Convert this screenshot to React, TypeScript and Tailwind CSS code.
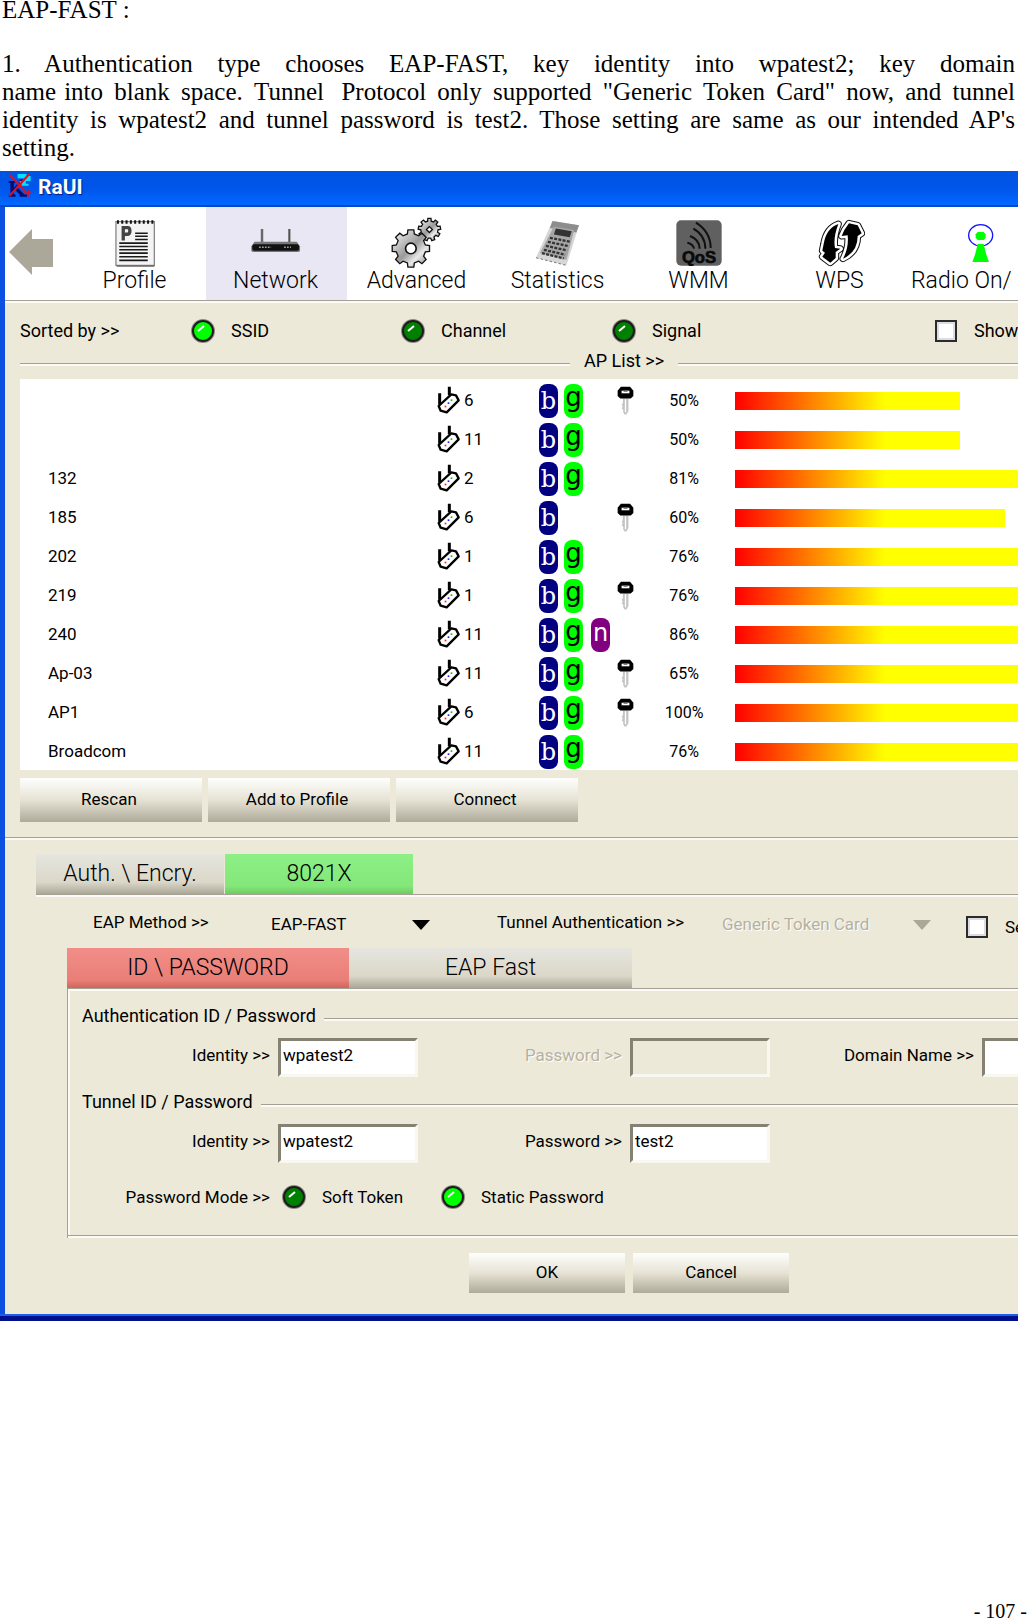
import React, { useState } from 'react';

type AccessPoint = {
    ssid: string;
    channel: number;
    modes: string;
    locked: boolean;
    signal: number;
};

const accessPoints: AccessPoint[] = [
    { ssid: '', channel: 6, modes: 'bg', locked: true, signal: 50 },
    { ssid: '', channel: 11, modes: 'bg', locked: false, signal: 50 },
    { ssid: '132', channel: 2, modes: 'bg', locked: false, signal: 81 },
    { ssid: '185', channel: 6, modes: 'b', locked: true, signal: 60 },
    { ssid: '202', channel: 1, modes: 'bg', locked: false, signal: 76 },
    { ssid: '219', channel: 1, modes: 'bg', locked: true, signal: 76 },
    { ssid: '240', channel: 11, modes: 'bgn', locked: false, signal: 86 },
    { ssid: 'Ap-03', channel: 11, modes: 'bg', locked: true, signal: 65 },
    { ssid: 'AP1', channel: 6, modes: 'bg', locked: true, signal: 100 },
    { ssid: 'Broadcom', channel: 11, modes: 'bg', locked: false, signal: 76 },
];

// Outline of a toothed wheel around (cx, cy)
const gearPath = (cx: number, cy: number, outer: number, inner: number, teeth: number) => {
    const points: string[] = [];
    const step = (Math.PI * 2) / teeth;
    for (let i = 0; i < teeth; i++) {
        const a = i * step - Math.PI / 2;
        [[-0.3, inner], [-0.2, outer], [0.2, outer], [0.3, inner]].forEach(([k, r]) => {
            points.push(`${(cx + Math.cos(a + k * step) * r).toFixed(1)},${(cy + Math.sin(a + k * step) * r).toFixed(1)}`);
        });
    }
    return `M${points.join('L')}Z`;
};

const LogoIcon: React.FC = () => (
    <svg viewBox="0 0 70 80" className="w-6 h-7 shrink-0" aria-hidden="true">
        <path d="M2 28H22V34H17V48L34 30V24H50V30H44L28 48L48 68H56V74H34V68L20 54L17 56V68H22V74H2V68H7V34H2Z" fill="#0a0a6e" />
        <path d="M28 8H54V14H66V28H52V36H60V42H40V34H34V28H46V20H28Z" fill="#00e5ff" />
        <path d="M4 10L58 66M62 8L4 72" stroke="#e01020" strokeWidth="6" />
        <path d="M48 62H66M58 54V74" stroke="#e01020" strokeWidth="5" />
    </svg>
);

const ProfileIcon: React.FC = () => (
    <svg viewBox="345 160 125 145" className="w-[42px] h-12" aria-hidden="true">
        <path d="M350 168H466V300H350Z" fill="#f4f4f4" stroke="#888" strokeWidth="4" />
        <path d="M352 302H466" stroke="#666" strokeWidth="5" />
        <path d="M356 164V174M369 164V174M382 164V174M395 164V174M408 164V174M421 164V174M434 164V174M447 164V174M460 164V174" stroke="#111" strokeWidth="6" />
        <path d="M372 225V186H386Q392 186 392 196Q392 206 384 206H372" fill="none" stroke="#444" strokeWidth="10" />
        <path d="M408 203H446M408 212H446M408 222H446M360 233H446M360 243H446M360 253H446M360 263H446M360 274H446M360 285H446" stroke="#1a1a1a" strokeWidth="5" />
    </svg>
);

const NetworkIcon: React.FC = () => (
    <svg viewBox="750 190 160 110" className="w-[52px] h-9" aria-hidden="true">
        <path d="M787 202V242M871 202V242" stroke="#8a8a8a" strokeWidth="8" />
        <path d="M787 202V242M871 202V242" stroke="#444" strokeWidth="3" />
        <path d="M764 241H894L904 256V268Q904 273 896 273H762Q754 273 754 268V256Z" fill="#777" />
        <rect x="757" y="249" width="144" height="20" rx="6" fill="#111" />
        <path d="M778 258H815M855 258H876" stroke="#aaa" strokeWidth="4" strokeDasharray="5 4" />
    </svg>
);

const AdvancedIcon: React.FC = () => (
    <svg viewBox="152 160 160 155" className="w-[53px] h-[52px]" aria-hidden="true">
        <defs>
            <linearGradient id="metal" x1="0" y1="0" x2="1" y2="1">
                <stop offset="0" stopColor="#ffffff" />
                <stop offset="0.5" stopColor="#9a9a9a" />
                <stop offset="0.7" stopColor="#e8e8e8" />
                <stop offset="1" stopColor="#777777" />
            </linearGradient>
        </defs>
        <path d={gearPath(271, 197, 34, 26, 9)} fill="url(#metal)" stroke="#111" strokeWidth="4" />
        <path d="M271 188L280 197L271 206L262 197Z" fill="#fff" stroke="#111" strokeWidth="4" />
        <path d={gearPath(215, 254, 57, 45, 8)} fill="url(#metal)" stroke="#111" strokeWidth="4" />
        <circle cx="215" cy="254" r="16" fill="#fff" stroke="#111" strokeWidth="5" />
    </svg>
);

const StatisticsIcon: React.FC = () => (
    <svg viewBox="585 165 140 145" className="w-[47px] h-12" aria-hidden="true">
        <path d="M640 171L720 184L682 305L590 282Z" fill="#d6d6d6" />
        <path d="M640 171L720 184L712 206L632 192Z" fill="#8d8d8d" />
        <path d="M644 188L706 198L682 288L602 268Z" fill="#a6a6a6" />
        <path d="M650 194L698 202L692 220L644 212Z" fill="#333" />
        <path d="M632 222L696 234M626 234L690 247M620 246L684 260M614 258L678 273M608 268L674 284" stroke="#333" strokeWidth="7" strokeDasharray="9 4" />
        <path d="M590 282L682 305" stroke="#777" strokeWidth="3" strokeDasharray="8 6" />
    </svg>
);

const QosIcon: React.FC = () => (
    <svg viewBox="0 0 138 138" className="w-[46px] h-[46px]" aria-hidden="true">
        <rect x="1" y="1" width="136" height="136" rx="14" fill="#606060" />
        <path d="M60 8Q104 36 104 84M52 26Q88 46 88 86M42 48Q70 58 71 86M34 68Q52 72 54 86" fill="none" stroke="#111" strokeWidth="6" />
        <text x="69" y="130" textAnchor="middle" className="font-['Liberation_Sans',sans-serif] font-bold text-[50px]" fill="#0a0a0a" stroke="#0a0a0a" strokeWidth="2">QoS</text>
    </svg>
);

const wpsShape = 'M482 178Q446 190 438 238L434 258L442 264L434 276L458 294L474 280V262L488 252L472 250Q466 220 482 178ZM496 282Q540 262 540 214L552 206L540 182L514 176L500 196L492 214L510 212Q514 250 496 282Z';

const WpsIcon: React.FC = () => (
    <svg viewBox="412 160 150 150" className="w-[50px] h-[50px]" aria-hidden="true">
        <path d={wpsShape} fill="#111" stroke="#111" strokeWidth="21" strokeLinejoin="round" />
        <path d={wpsShape} fill="#fff" stroke="#fff" strokeWidth="15" strokeLinejoin="round" />
        <path d={wpsShape} fill="#000" />
    </svg>
);

const RadioIcon: React.FC = () => (
    <svg viewBox="868 178 84 118" className="w-7 h-10" aria-hidden="true">
        <ellipse cx="909" cy="214" rx="36" ry="32" fill="none" stroke="#1414ff" strokeWidth="4" />
        <path d="M900 204H918L924 211V221L918 228H900L894 221V211Z" fill="#00ff00" />
        <path d="M900 240H918L926 272L934 294H884L892 272Z" fill="#00ff00" />
    </svg>
);

const ChannelIcon: React.FC = () => (
    <svg viewBox="114 28 75 84" className="w-[25px] h-7 shrink-0" aria-hidden="true">
        <path d="M122 50V84M151 30V56" stroke="#000" strokeWidth="9" />
        <path d="M157 53L171 56L179 71L143 107L125 102L119 88Z" fill="#fff" stroke="#000" strokeWidth="7" strokeLinejoin="round" />
        <path d="M137 87h5v5h-5Z" fill="#ff2020" />
        <path d="M146 77h5v5h-5Z" fill="#2020ff" />
        <path d="M155 68h5v5h-5Z" fill="#00d000" />
    </svg>
);

const KeyIcon: React.FC = () => (
    <svg viewBox="650 32 52 88" className="w-[17px] h-[29px]" role="img" aria-label="Secured">
        <path d="M668 70H685V108L679 119H673L669 112V104L664 100L668 94L664 90L668 84Z" fill="#c4c4c4" />
        <path d="M676 72V112" stroke="#fff" strokeWidth="4" />
        <path d="M662 34H690L700 46V62L692 70H660L652 62V46Z" fill="#000" />
        <path d="M664 46H688V54H664Z" fill="#fff" />
        <path d="M670 46H682V50H670Z" fill="#888" />
    </svg>
);

const Arrow: React.FC<{ className?: string }> = ({ className }) => (
    <svg viewBox="0 0 18 10" className={`absolute right-0 top-2 w-[18px] h-[10px] pointer-events-none ${className}`} aria-hidden="true">
        <path d="M0 0H18L9 10Z" fill="currentColor" />
    </svg>
);

const Groove: React.FC<{ className?: string }> = ({ className = '' }) => (
    <hr className={`h-[3px] border-0 border-t border-[#a5a192] bg-[#fbfaf6] ${className}`} />
);

type LedProps = { name: string; label: string; checked: boolean; onChange: () => void };

const Led: React.FC<LedProps> = ({ name, label, checked, onChange }) => (
    <label className="flex items-center gap-4 shrink-0">
        <span className="grid shrink-0">
            <input
                type="radio"
                name={name}
                checked={checked}
                onChange={onChange}
                className="col-start-1 row-start-1 appearance-none w-6 h-6 rounded-full border-2 border-[#8a8a80] bg-[#008000] checked:bg-[#00ff00]"
            />
            <svg viewBox="0 0 24 24" className="col-start-1 row-start-1 w-6 h-6 pointer-events-none" aria-hidden="true">
                <circle cx="12" cy="12" r="10" fill="none" stroke="#1c1c1c" strokeWidth="2" />
                <path d="M7 12L13 7" stroke="#fff" strokeWidth="2" />
            </svg>
        </span>
        {label}
    </label>
);

const CheckBox: React.FC<{ label: string }> = ({ label }) => (
    <label className="flex items-center gap-[17px] shrink-0">
        <input type="checkbox" className="appearance-none shrink-0 w-[22px] h-[22px] border-2 border-[#2b2b2b] bg-white shadow-[inset_0_0_0_2px_#dcdce4] checked:bg-[#2b2b2b]" />
        {label}
    </label>
);

const PushButton: React.FC<{ children: React.ReactNode; className: string }> = ({ children, className }) => (
    <button type="button" className={`bg-linear-to-b from-[#fefefd] via-[#e6e3d4] to-[#aeab9b] text-black ${className}`}>
        {children}
    </button>
);

const modeStyles: Record<string, string> = {
    b: "bg-[#000080] text-white font-['DejaVu_Serif',serif] text-[24px]",
    g: "bg-[#00ff00] text-black font-['DejaVu_Sans',sans-serif] text-[26px] pb-2",
    n: "ml-0.5 bg-[#800080] text-white font-['DejaVu_Sans',sans-serif] text-[24px] pb-1",
};

const ModeBadge: React.FC<{ mode: string }> = ({ mode }) => (
    <span className={`flex items-center justify-center w-[19px] h-[34px] rounded-lg leading-none ${modeStyles[mode]}`}>
        {mode}
    </span>
);

const Toolbar: React.FC = () => {
    const tabs = [
        { label: 'Profile', icon: <ProfileIcon /> },
        { label: 'Network', icon: <NetworkIcon /> },
        { label: 'Advanced', icon: <AdvancedIcon /> },
        { label: 'Statistics', icon: <StatisticsIcon /> },
        { label: 'WMM', icon: <QosIcon /> },
        { label: 'WPS', icon: <WpsIcon /> },
        { label: 'Radio On/', icon: <RadioIcon /> },
    ];
    return (
        <nav className="flex h-[93px] bg-white">
            <button type="button" aria-label="Back" className="flex w-[60px] shrink-0 items-center pl-1 pb-1">
                <svg viewBox="0 0 44 46" className="w-11 h-[46px]" aria-hidden="true">
                    <path d="M0 23L23 0V10H44V38H23V46Z" fill="#aca899" />
                </svg>
            </button>
            {tabs.map(tab => (
                <button
                    key={tab.label}
                    type="button"
                    className={`flex w-[141px] shrink-0 flex-col items-center pt-[11px] pr-0.5 text-[23px] leading-[26px] font-light ${tab.label === 'Network' ? 'bg-[#e9e7f4]' : ''}`}
                >
                    <span className="flex h-[50px] items-center justify-center">{tab.icon}</span>
                    <span className={tab.label === 'Radio On/' ? 'self-start' : ''}>{tab.label}</span>
                </button>
            ))}
        </nav>
    );
};

const SortBar: React.FC = () => {
    const [sort, setSort] = useState('SSID');
    return (
        <div className="grid grid-cols-[171px_210px_211px_323px_1fr] h-[50px] pl-[15px] pt-1.5 items-center text-lg leading-6 whitespace-nowrap">
            <span>Sorted by &gt;&gt;</span>
            {['SSID', 'Channel', 'Signal'].map(key => (
                <Led key={key} name="sort" label={key} checked={sort === key} onChange={() => setSort(key)} />
            ))}
            <CheckBox label="Show" />
        </div>
    );
};

const ApTable: React.FC = () => (
    <div className="ml-[15px] bg-white pt-px overflow-hidden">
        <table className="w-full table-fixed">
            <colgroup>
                <col className="w-[417px]" />
                <col className="w-[102px]" />
                <col className="w-[78px]" />
                <col className="w-[37px]" />
                <col className="w-[60px]" />
                <col />
            </colgroup>
            <tbody>
                {accessPoints.map((ap, index) => (
                    <tr key={index} className="h-[39px]">
                        <td className="p-0 pt-0.5 pl-7 text-[17px]">{ap.ssid}</td>
                        <td className="p-0">
                            <span className="flex items-center gap-0.5 text-[17px] leading-6">
                                <ChannelIcon />
                                {ap.channel}
                            </span>
                        </td>
                        <td className="p-0 pt-0.5">
                            <span className="flex gap-1.5">
                                {ap.modes.split('').map(mode => <ModeBadge key={mode} mode={mode} />)}
                            </span>
                        </td>
                        <td className="p-0 pt-0.5">{ap.locked && <KeyIcon />}</td>
                        <td className="p-0 pt-0.5 text-center text-[16px]">{ap.signal}%</td>
                        <td className="p-0 pt-0.5 pl-[21px]">
                            <div
                                className="h-[18px] bg-[linear-gradient(to_right,#ff0000,#ffff00_150px)]"
                                style={{ width: `${ap.signal * 4.5}px` }}
                            />
                        </td>
                    </tr>
                ))}
            </tbody>
        </table>
    </div>
);

const GroupTitle: React.FC<{ children: React.ReactNode }> = ({ children }) => (
    <div className="flex h-4 items-center gap-2 pl-3 text-[18px] leading-4 whitespace-nowrap">
        <h3>{children}</h3>
        <Groove className="mt-1.5 grow" />
    </div>
);

const Field: React.FC<{ id: string; label: string; value?: string; disabled?: boolean }> = ({ id, label, value = '', disabled }) => (
    <>
        <label htmlFor={id} className={`pb-1.5 text-right ${disabled ? 'text-[#b5b1a2] [text-shadow:1px_1px_0_#fff]' : ''}`}>
            {label} &gt;&gt;
        </label>
        <input
            id={id}
            type="text"
            defaultValue={value}
            disabled={disabled}
            className="w-[140px] h-[39px] border-3 border-t-[#858173] border-l-[#858173] border-r-[#f8f7f0] border-b-[#f8f7f0] bg-white pl-0.5 pb-1.5 disabled:bg-[#ece9d8]"
        />
    </>
);

const CredentialsPanel: React.FC = () => {
    const [mode, setMode] = useState('Static Password');
    return (
        <section className="ml-[62px] border-l border-[#a5a192] text-[17px] leading-6 whitespace-nowrap">
            <Groove />
            <div className="border-l-2 border-[#fbfaf6] pt-[17px] pb-[26px]">
                <GroupTitle>Authentication ID / Password</GroupTitle>
                <div className="mt-3.5 grid grid-cols-[200px_140px_196px_140px_196px_140px] gap-x-2 items-center">
                    <Field id="auth-identity" label="Identity" value="wpatest2" />
                    <Field id="auth-password" label="Password" disabled />
                    <Field id="auth-domain" label="Domain Name" />
                </div>
                <div className="mt-[17px]">
                    <GroupTitle>Tunnel ID / Password</GroupTitle>
                </div>
                <div className="mt-3.5 grid grid-cols-[200px_140px_196px_140px] gap-x-2 items-center">
                    <Field id="tunnel-identity" label="Identity" value="wpatest2" />
                    <Field id="tunnel-password" label="Password" value="test2" />
                </div>
                <div className="mt-[22px] flex items-center">
                    <span className="w-[200px] text-right">Password Mode &gt;&gt;</span>
                    <div className="ml-3 w-[159px]">
                        <Led name="mode" label="Soft Token" checked={mode === 'Soft Token'} onChange={() => setMode('Soft Token')} />
                    </div>
                    <Led name="mode" label="Static Password" checked={mode === 'Static Password'} onChange={() => setMode('Static Password')} />
                </div>
            </div>
            <Groove />
        </section>
    );
};

const grayTab = 'bg-linear-to-b from-[#e6e5df] from-0% via-[#dbd8c9] via-70% to-[#aca899]';

const App: React.FC = () => {
    return (
        <main className="flex min-h-screen flex-col overflow-hidden bg-white text-black">
            <article className="pl-0.5 pr-3 font-['Liberation_Serif',serif] text-[25px] leading-7">
                <h1 className="leading-5">EAP-FAST :</h1>
                <p className="mt-[30px]">
                    <span className="block [text-align-last:justify]">
                        1. Authentication type chooses EAP-FAST, key identity into wpatest2; key domain
                    </span>
                    <span className="block [text-align-last:justify]">
                        <span className="inline-flex gap-2"><span>name</span> <span>into</span></span> blank space. <span className="inline-block">Tunnel&nbsp;</span> Protocol only supported "Generic Token Card" now, and tunnel
                    </span>
                    <span className="block [text-align-last:justify]">
                        identity is wpatest2 and tunnel password is test2. Those setting are same as our intended AP's
                    </span>
                    <span className="block">setting.</span>
                </p>
            </article>

            <div className="mt-[9px] mr-[9px] overflow-hidden bg-[#ece9d8] font-['Roboto',sans-serif]">
                <header className="flex h-9 items-start gap-1.5 bg-linear-to-b from-[#0054e3] via-[#0055ea] via-50% to-[#0068ff] border-b-2 border-[#0048cc] pl-2">
                    <LogoIcon />
                    <h2 className="pt-1 text-[21px] leading-6 font-bold text-white [text-shadow:1px_1px_1px_#0a1883]">RaUI</h2>
                </header>

                <div className="border-l-5 border-[#0b50e0] pb-[21px]">
                    <Toolbar />
                    <Groove />
                    <SortBar />
                    <div className="mb-2.5 flex h-4 items-center gap-3.5 pl-[15px] text-[18px] leading-4">
                        <Groove className="mt-1.5 w-[550px]" />
                        <h3>AP List &gt;&gt;</h3>
                        <Groove className="mt-1.5 grow" />
                    </div>
                    <ApTable />
                    <div className="mt-2 mb-[15px] flex gap-1.5 pl-[15px] text-[17px]">
                        <PushButton className="w-[182px] h-11 pr-1">Rescan</PushButton>
                        <PushButton className="w-[182px] h-11 pr-1">Add to Profile</PushButton>
                        <PushButton className="w-[182px] h-11 pr-1">Connect</PushButton>
                    </div>
                    <Groove />

                    <div className="mt-3.5 ml-[31px] flex gap-px text-[23px] font-light">
                        <button type="button" className={`w-[188px] h-10 ${grayTab}`}>Auth. \ Encry.</button>
                        <button type="button" className="w-[188px] h-10 bg-linear-to-b from-[#8cf087] via-[#84e77a] via-80% to-[#6ccc62]">8021X</button>
                    </div>
                    <Groove className="ml-[31px]" />

                    <div className="flex h-[51px] items-center pl-[88px] pt-0.5 text-[17px] leading-6 whitespace-nowrap">
                        <label htmlFor="eap-method" className="w-[178px] shrink-0 pb-1">EAP Method &gt;&gt;</label>
                        <div className="relative shrink-0">
                            <select id="eap-method" className="block h-6 w-[159px] appearance-none bg-transparent">
                                <option>EAP-FAST</option>
                            </select>
                            <Arrow className="text-black" />
                        </div>
                        <label htmlFor="tunnel-auth" className="ml-[67px] w-[225px] shrink-0 pb-1">Tunnel Authentication &gt;&gt;</label>
                        <div className="relative mr-[35px] shrink-0">
                            <select id="tunnel-auth" disabled className="block h-6 w-[209px] appearance-none bg-transparent text-[#b5b1a2] opacity-100 [text-shadow:1px_1px_0_#fff]">
                                <option>Generic Token Card</option>
                            </select>
                            <Arrow className="text-[#aca899]" />
                        </div>
                        <div className="pt-1.5">
                            <CheckBox label="Se" />
                        </div>
                    </div>

                    <div className="ml-[62px] flex text-[23px] font-light">
                        <button type="button" className="w-[282px] h-10 bg-linear-to-b from-[#f18e88] via-[#e97f77] via-80% to-[#cf665e]">ID \ PASSWORD</button>
                        <button type="button" className={`w-[283px] h-10 ${grayTab}`}>EAP Fast</button>
                    </div>
                    <CredentialsPanel />

                    <div className="mt-[15px] ml-[464px] flex gap-2 text-[17px]">
                        <PushButton className="w-[156px] h-10">OK</PushButton>
                        <PushButton className="w-[156px] h-10">Cancel</PushButton>
                    </div>
                </div>
                <div className="h-[7px] border-t-2 border-[#1c5fe0] bg-[#000f8e]" />
            </div>

            <footer className="mt-auto text-right font-['Liberation_Serif',serif] text-[20px] leading-4">- 107 -</footer>
        </main>
    );
};

export default App;
